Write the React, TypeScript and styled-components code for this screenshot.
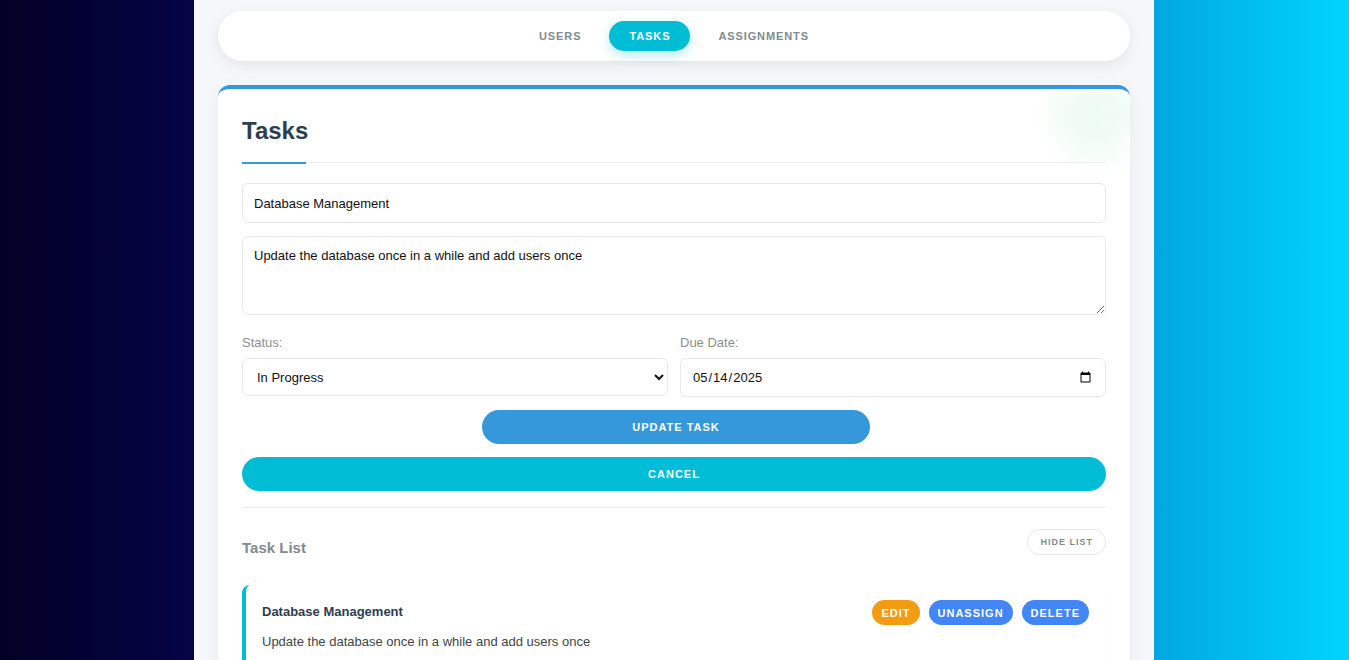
import React from "react";
import styled, { createGlobalStyle } from "styled-components";

const GlobalStyle = createGlobalStyle`
  html, body { margin: 0; padding: 0; }
  body {
    font-family: "Liberation Sans", Arial, sans-serif;
    background: linear-gradient(90deg, #020024 0%, #090979 35%, #00d4ff 100%);
    min-height: 100vh;
  }
  * { box-sizing: border-box; }
`;

const Page = styled.div`
  width: 960px;
  margin-left: calc(50% - 480.5px);
  min-height: 100vh;
  background: #f5f7fa;
  padding: 11px 24px 40px;
`;

const Nav = styled.nav`
  height: 50px;
  background: #fff;
  border-radius: 25px;
  box-shadow: 0 4px 15px rgba(0, 0, 0, 0.08);
  display: flex;
  align-items: center;
  justify-content: center;
  gap: 8px;
`;

const NavItem = styled.button<{ $active?: boolean }>`
  height: 30px;
  padding: 0 20px;
  border: none;
  border-radius: 15px;
  font-family: "Liberation Sans", Arial, sans-serif;
  font-size: 11px;
  font-weight: 700;
  letter-spacing: 0.9px;
  color: ${(p) => (p.$active ? "#fff" : "#7f8c8d")};
  background: ${(p) => (p.$active ? "#00bcd4" : "transparent")};
  box-shadow: ${(p) => (p.$active ? "0 4px 12px rgba(0, 188, 212, 0.3)" : "none")};
  cursor: pointer;
`;

const Card = styled.section`
  position: relative;
  overflow: hidden;
  margin-top: 24px;
  background: #fff;
  border-radius: 12px;
  border-top: 4px solid #3498db;
  box-shadow: 0 5px 20px rgba(0, 0, 0, 0.05);
  padding: 27px 24px 24px;

  &::before {
    content: "";
    position: absolute;
    top: -36px;
    right: -28px;
    width: 124px;
    height: 124px;
    border-radius: 50%;
    background: radial-gradient(circle, rgba(46, 204, 113, 0.09) 0%, rgba(46, 204, 113, 0.05) 40%, rgba(46, 204, 113, 0) 70%);
    pointer-events: none;
  }
`;

const Title = styled.h2`
  position: relative;
  margin: 0 0 20px;
  font-size: 24px;
  line-height: 29px;
  font-weight: 700;
  color: #2c3e50;
  padding-bottom: 17px;
  border-bottom: 1px solid #eceff1;

  &::after {
    content: "";
    position: absolute;
    left: 0;
    bottom: -2px;
    width: 64px;
    height: 2px;
    background: #3498db;
  }
`;

const Form = styled.form`
  display: flex;
  flex-direction: column;
  gap: 13px;
`;

const fieldBase = `
  width: 100%;
  font-family: "Liberation Sans", Arial, sans-serif;
  font-size: 13px;
  color: #111;
  background: #fff;
  border: 1px solid #e8e8e8;
  border-radius: 6px;
  outline: none;
`;

const TextInput = styled.input`
  ${fieldBase}
  height: 40px;
  padding: 0 11px;
`;

const TextArea = styled.textarea`
  ${fieldBase}
  height: 79px;
  padding: 11px;
  resize: vertical;
  display: block;
`;

const Row = styled.div`
  display: grid;
  grid-template-columns: 1fr 1fr;
  gap: 12px;
  margin-top: 7px;
`;

const Field = styled.div`
  display: flex;
  flex-direction: column;
  gap: 8px;
`;

const Label = styled.label`
  font-size: 13px;
  color: #8a8f93;
  line-height: 15px;
`;

const Select = styled.select`
  ${fieldBase}
  height: 38px;
  padding: 0 10px;
`;

const DateInput = styled.input`
  ${fieldBase}
  height: 39px;
  padding: 0 11px;
`;

const PillButton = styled.button<{ $bg: string; $width?: string; $offset?: string }>`
  align-self: center;
  width: ${(p) => p.$width || "100%"};
  margin-left: ${(p) => p.$offset || "0"};
  height: 34px;
  border: none;
  border-radius: 17px;
  background: ${(p) => p.$bg};
  color: #fff;
  font-family: "Liberation Sans", Arial, sans-serif;
  font-size: 11px;
  font-weight: 700;
  letter-spacing: 1px;
  cursor: pointer;
`;

const ListSection = styled.div`
  margin-top: 16px;
  border-top: 1px solid #eceff1;
  padding-top: 21px;
`;

const ListHeader = styled.div`
  display: flex;
  justify-content: space-between;
  align-items: flex-start;
`;

const ListTitle = styled.h3`
  margin: 10px 0 0;
  font-size: 15px;
  line-height: 18px;
  font-weight: 700;
  color: #7f8c8d;
`;

const GhostButton = styled.button`
  height: 26px;
  padding: 0 12px;
  background: #fff;
  border: 1px solid #e8e8e8;
  border-radius: 13px;
  font-family: "Liberation Sans", Arial, sans-serif;
  font-size: 9px;
  font-weight: 700;
  letter-spacing: 1px;
  color: #7f8c8d;
  cursor: pointer;
`;

const TaskItem = styled.div`
  margin-top: 28px;
  background: #fff;
  border-left: 4px solid #00bcd4;
  border-radius: 8px 0 0 0;
  padding: 15px 17px 16px 16px;
  box-shadow: 0 2px 8px rgba(0, 0, 0, 0.015);
`;

const TaskHead = styled.div`
  display: flex;
  justify-content: space-between;
  align-items: center;
`;

const TaskName = styled.div`
  font-size: 13px;
  font-weight: 700;
  color: #2c3e50;
  margin-top: -2px;
`;

const Actions = styled.div`
  display: flex;
  gap: 9px;
`;

const SmallButton = styled.button<{ $bg: string }>`
  height: 25px;
  padding: 0 9px;
  border: none;
  border-radius: 13px;
  background: ${(p) => p.$bg};
  color: #fff;
  font-family: "Liberation Sans", Arial, sans-serif;
  font-size: 11px;
  font-weight: 700;
  letter-spacing: 1px;
  cursor: pointer;
`;

const TaskDesc = styled.p`
  margin: 8px 0 0;
  font-size: 13px;
  line-height: 17px;
  color: #444;
`;

export default function App() {
  return (
    <>
      <GlobalStyle />
      <Page>
        <Nav>
          <NavItem>USERS</NavItem>
          <NavItem $active>TASKS</NavItem>
          <NavItem>ASSIGNMENTS</NavItem>
        </Nav>
        <Card>
          <Title>Tasks</Title>
          <Form onSubmit={(e) => e.preventDefault()}>
            <TextInput defaultValue="Database Management" />
            <TextArea defaultValue="Update the database once in a while and add users once" />
            <Row>
              <Field>
                <Label>Status:</Label>
                <Select defaultValue="In Progress">
                  <option>Pending</option>
                  <option>In Progress</option>
                  <option>Completed</option>
                </Select>
              </Field>
              <Field>
                <Label>Due Date:</Label>
                <DateInput type="date" defaultValue="2025-05-14" />
              </Field>
            </Row>
            <PillButton type="submit" $bg="#3498db" $width="388px" $offset="4px">
              UPDATE TASK
            </PillButton>
            <PillButton type="button" $bg="#00bcd4">
              CANCEL
            </PillButton>
          </Form>
          <ListSection>
            <ListHeader>
              <ListTitle>Task List</ListTitle>
              <GhostButton>HIDE LIST</GhostButton>
            </ListHeader>
            <TaskItem>
              <TaskHead>
                <TaskName>Database Management</TaskName>
                <Actions>
                  <SmallButton $bg="#f39c12">EDIT</SmallButton>
                  <SmallButton $bg="#4285f4">UNASSIGN</SmallButton>
                  <SmallButton $bg="#4285f4">DELETE</SmallButton>
                </Actions>
              </TaskHead>
              <TaskDesc>Update the database once in a while and add users once</TaskDesc>
            </TaskItem>
          </ListSection>
        </Card>
      </Page>
    </>
  );
}
